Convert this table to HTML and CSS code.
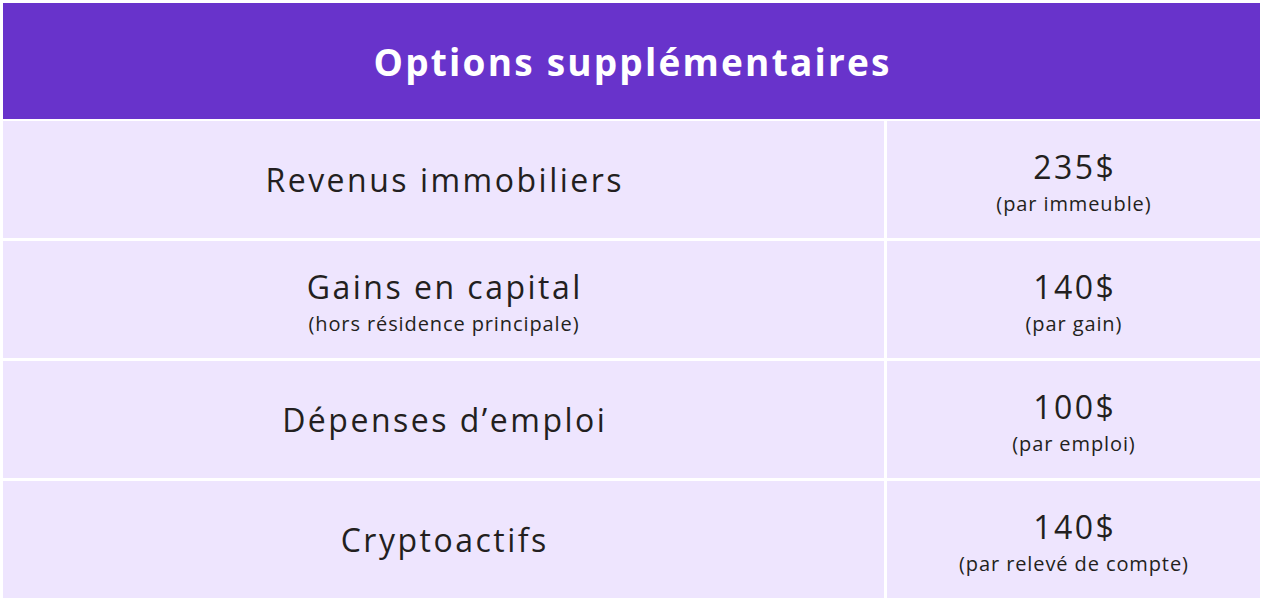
FILE: index.html
```html
<!DOCTYPE html>
<html lang="fr">
<head>
<meta charset="utf-8">
<link rel="stylesheet" href="styles.css">
</head>
<body>
<div class="table">
  <div class="header"><span class="title">Options supplémentaires</span></div>
  <div class="row">
    <div class="cell"><div class="main">Revenus immobiliers</div></div>
    <div class="cell stack"><div class="main">235$</div><div class="sub">(par immeuble)</div></div>
  </div>
  <div class="row">
    <div class="cell stack"><div class="main">Gains en capital</div><div class="sub">(hors résidence principale)</div></div>
    <div class="cell stack"><div class="main">140$</div><div class="sub">(par gain)</div></div>
  </div>
  <div class="row">
    <div class="cell"><div class="main">Dépenses d’emploi</div></div>
    <div class="cell stack"><div class="main">100$</div><div class="sub">(par emploi)</div></div>
  </div>
  <div class="row">
    <div class="cell"><div class="main">Cryptoactifs</div></div>
    <div class="cell stack"><div class="main">140$</div><div class="sub">(par relevé de compte)</div></div>
  </div>
</div>
</body>
</html>
```

FILE: styles.css
```css
html, body {
  margin: 0;
  padding: 0;
  background: #ffffff;
}
body {
  font-family: "Open Sans", "Noto Sans", sans-serif;
  color: #231f20;
}
.table {
  padding: 3px 4px 3px 3px;
  display: flex;
  flex-direction: column;
  gap: 3px;
}
.header {
  height: 116px;
  margin-bottom: -1px;
  background: #6833cb;
  color: #ffffff;
  display: flex;
  align-items: center;
  justify-content: center;
}
.title {
  font-weight: 700;
  font-size: 37px;
  letter-spacing: 2.2px;
  margin-right: -2.2px;
}
.row {
  display: grid;
  grid-template-columns: 881px 1fr;
  gap: 3px;
  height: 117px;
}
.cell {
  background: #eee5fe;
  display: flex;
  flex-direction: column;
  align-items: center;
  justify-content: center;
}
.stack {
  padding-top: 4px;
  box-sizing: border-box;
}
.main {
  font-size: 32px;
  line-height: 38px;
  letter-spacing: 2.5px;
  margin-right: -2.5px;
}
.sub {
  font-size: 20px;
  line-height: 24px;
  margin-top: 6px;
  letter-spacing: 0.9px;
  margin-right: -0.9px;
}
```
